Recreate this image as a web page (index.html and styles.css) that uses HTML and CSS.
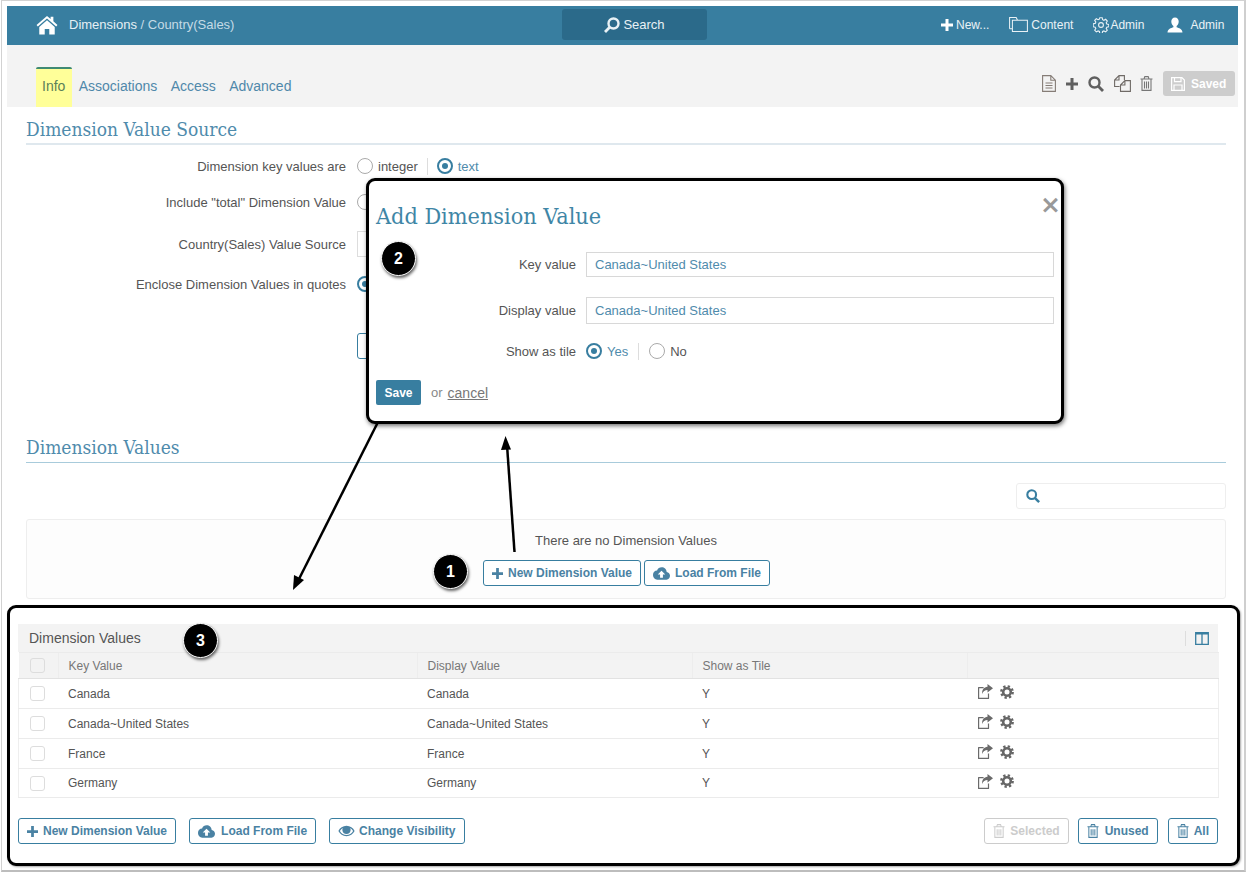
FILE: index.html
```html
<!DOCTYPE html>
<html lang="en">
<head>
<meta charset="utf-8">
<title>Dimension Values</title>
<link rel="stylesheet" href="styles.css">
</head>
<body>
<svg class="defs" width="0" height="0" aria-hidden="true">
  <symbol id="i-home" viewBox="0 0 24 22"><path d="M12 1 0.5 11l1.4 1.6L12 3.8l10.1 8.8 1.4-1.6L19 7V2h-3v2.4z"/><path d="M12 5.800 3.500 13.200V21.500h6v-6h5v6h6v-8.300z"/></symbol>
  <symbol id="i-plus" viewBox="0 0 12 12"><path d="M4.500 0h3v4.500H12v3H7.500V12h-3V7.500H0v-3h4.500z"/></symbol>
  <symbol id="i-search" viewBox="0 0 16 16"><circle cx="6.500" cy="6.500" r="5" fill="none" stroke="currentColor" stroke-width="2.400"/><path d="M10.300 10.300 15 15" fill="none" stroke="currentColor" stroke-width="2.800"/></symbol>
  <symbol id="i-folder" viewBox="0 0 20 16"><path d="M3.500 15.500V3.500h16v12zM3.500 3.500V3M.5 12.500V.5h7l1.500 3M.5 12.500h3" fill="none" stroke="currentColor" stroke-width="1.100"/></symbol>
  <symbol id="i-gear-o" viewBox="0 0 16 16"><circle cx="8" cy="8" r="2.400" fill="none" stroke="currentColor" stroke-width="1.100"/><path d="M6.800.7h2.400l.4 2 1.300.6 1.800-1 1.600 1.700-1.100 1.700.6 1.300 2 .4v2.400l-2 .4-.6 1.300 1.100 1.700-1.600 1.700-1.800-1-1.300.6-.4 2H6.800l-.4-2-1.300-.6-1.800 1-1.600-1.700 1.100-1.700-.6-1.300-2-.4V6.800l2-.4.6-1.300-1.100-1.700 1.600-1.700 1.800 1 1.300-.6z" fill="none" stroke="currentColor" stroke-width="1.100"/></symbol>
  <symbol id="i-user" viewBox="0 0 16 16"><path d="M8 .5c2.300 0 3.700 1.700 3.700 4 0 2-1 3.700-2.100 4.500v1.300c2.300.8 5.700 1.600 5.900 5.200H.5c.2-3.600 3.600-4.400 5.900-5.200V9C5.300 8.200 4.300 6.500 4.300 4.500c0-2.300 1.400-4 3.700-4z"/></symbol>
  <symbol id="i-doc" viewBox="0 0 14 17"><path d="M.6.6h8.200l4.600 4.600v11.200H.6zM8.800.6v4.600h4.600" fill="none" stroke="currentColor" stroke-width="1.100"/><path d="M3.500 8h7M3.500 10.500h7M3.500 13h7" stroke="currentColor" stroke-width="1.200"/></symbol>
  <symbol id="i-copy" viewBox="0 0 17 17"><path d="M.6 10V5L5 .6h5.400V5M5 .6V5H.6M.6 10v1.500h5" fill="none" stroke="currentColor" stroke-width="1.100"/><path d="M6.500 16.400V10l4.400-4.400h5.500v10.800zM6.500 10h4.400V5.600" fill="none" stroke="currentColor" stroke-width="1.100"/></symbol>
  <symbol id="i-trash" viewBox="0 0 13 15"><path d="M.5 3h12M4 3l.8-2.400h3.400L9 3M2 3v11.400h9V3" fill="none" stroke="currentColor" stroke-width="1.100"/><path d="M4.500 5.500v7M6.500 5.500v7M8.500 5.500v7" stroke="currentColor" stroke-width="1.100"/></symbol>
  <symbol id="i-save" viewBox="0 0 14 14"><path d="M.6.6h10.300l2.500 2.500v10.300H.6z" fill="none" stroke="currentColor" stroke-width="1.200"/><path d="M3.500.6v4h6.500v-4M3 13.400V8h8v5.400" fill="none" stroke="currentColor" stroke-width="1.200"/></symbol>
  <symbol id="i-cloud" viewBox="0 0 18 13"><path d="M14.500 5C14.300 2.200 12 0 9.200 0 7 0 5.100 1.300 4.300 3.300 1.900 3.300 0 5.300 0 7.800 0 10.600 2 13 4.500 13h9.800c2.100 0 3.700-1.800 3.700-4 0-2-1.500-3.700-3.500-4zM10.500 7.500V11h-3V7.500H5L9 3.500l4 4z"/></symbol>
  <symbol id="i-eye" viewBox="0 0 18 12"><path d="M9 .5C5.200.5 2 2.800.4 6 2 9.200 5.200 11.500 9 11.500s7-2.300 8.600-5.500C16 2.800 12.800.5 9 .5zm0 9.700C6.100 10.200 3.500 8.600 2 6c.8-1.300 1.900-2.400 3.200-3.100-.4.600-.6 1.300-.6 2 0 2.400 2 4.400 4.400 4.400s4.400-2 4.400-4.400c0-.7-.2-1.400-.6-2 1.300.7 2.400 1.800 3.200 3.100-1.500 2.600-4.100 4.200-7 4.200z"/></symbol>
  <symbol id="i-share" viewBox="0 0 15 15"><path d="M10.500 9.500v4.900H.6V3.600h5" fill="none" stroke="currentColor" stroke-width="1.200" stroke-linejoin="round"/><path d="M9.500 0 15 4.300 9.500 8.600V6C7 6 5 7.300 4 10c0-4.500 2-7 5.500-7.300z"/></symbol>
  <symbol id="i-gear" viewBox="0 0 14 14"><circle cx="7" cy="7" r="3.800" fill="none" stroke="currentColor" stroke-width="2.600"/><circle cx="7" cy="7" r="5.700" fill="none" stroke="currentColor" stroke-width="2.400" stroke-dasharray="2.300 2.177"/></symbol>
  <symbol id="i-cols" viewBox="0 0 14 13"><path d="M.7.7h12.600v11.600H.7zM7 .7v11.600M.7 1.800h12.600" fill="none" stroke="currentColor" stroke-width="1.300"/></symbol>
</svg>

<div class="frame">
  <header class="topbar">
    <div class="crumbs">
      <svg class="ic-home"><use href="#i-home"/></svg>
      <span class="crumb-main">Dimensions</span><span class="crumb-sub">&nbsp;/ Country(Sales)</span>
    </div>
    <div class="global-search"><svg class="ic-gs"><use href="#i-search"/></svg>Search</div>
    <nav class="topnav">
      <span class="nav-item nav-new"><svg class="ic-12"><use href="#i-plus"/></svg>New...</span>
      <span class="nav-item nav-content"><svg class="ic-folder"><use href="#i-folder"/></svg>Content</span>
      <span class="nav-item nav-admin"><svg class="ic-16"><use href="#i-gear-o"/></svg>Admin</span>
      <span class="nav-item nav-user"><svg class="ic-16"><use href="#i-user"/></svg>Admin</span>
    </nav>
  </header>

  <div class="subbar">
    <div class="tabs">
      <span class="tab tab-active">Info</span>
      <span class="tab">Associations</span>
      <span class="tab">Access</span>
      <span class="tab">Advanced</span>
    </div>
    <div class="tools">
      <svg class="t-doc"><use href="#i-doc"/></svg>
      <svg class="t-plus"><use href="#i-plus"/></svg>
      <svg class="t-search"><use href="#i-search"/></svg>
      <svg class="t-copy"><use href="#i-copy"/></svg>
      <svg class="t-trash"><use href="#i-trash"/></svg>
      <span class="saved"><svg class="ic-14"><use href="#i-save"/></svg>Saved</span>
    </div>
  </div>

  <main class="content">
    <h2 class="section-title first">Dimension Value Source</h2>
    <div class="form">
      <div class="form-row r1">
        <span class="label">Dimension key values are</span>
        <span class="radio"></span><span class="opt">integer</span><span class="sep"></span>
        <span class="radio on"></span><span class="opt opt-on">text</span>
      </div>
      <div class="form-row r2"><span class="label">Include "total" Dimension Value</span><span class="radio"></span></div>
      <div class="form-row r3"><span class="label">Country(Sales) Value Source</span><span class="field-stub"></span></div>
      <div class="form-row r4"><span class="label">Enclose Dimension Values in quotes</span><span class="radio on"></span></div>
      <div class="form-row r5"><span class="label"></span><span class="btn-stub"></span></div>
    </div>

    <h2 class="section-title second">Dimension Values</h2>
    <div class="search-line"><div class="search-box"><svg class="ic-14 blue"><use href="#i-search"/></svg></div></div>
    <div class="empty">
      <p class="empty-text">There are no Dimension Values</p>
      <div class="empty-actions">
        <span class="btn"><svg class="ic-11"><use href="#i-plus"/></svg>New Dimension Value</span>
        <span class="btn"><svg class="ic-cloud"><use href="#i-cloud"/></svg>Load From File</span>
      </div>
    </div>
  </main>

  <section class="callout">
    <div class="grid">
      <div class="grid-title">
        <span>Dimension Values</span>
        <span class="grid-tools"><svg class="ic-cols"><use href="#i-cols"/></svg></span>
      </div>
      <table class="values">
        <colgroup><col class="c1"><col class="c2"><col class="c3"><col class="c4"><col class="c5"></colgroup>
        <thead>
          <tr><th><span class="check"></span></th><th>Key Value</th><th>Display Value</th><th>Show as Tile</th><th></th></tr>
        </thead>
        <tbody>
          <tr><td><span class="check"></span></td><td>Canada</td><td>Canada</td><td>Y</td><td class="acts"><svg class="ic-share"><use href="#i-share"/></svg><svg class="ic-gear"><use href="#i-gear"/></svg></td></tr>
          <tr><td><span class="check"></span></td><td>Canada~United States</td><td>Canada~United States</td><td>Y</td><td class="acts"><svg class="ic-share"><use href="#i-share"/></svg><svg class="ic-gear"><use href="#i-gear"/></svg></td></tr>
          <tr><td><span class="check"></span></td><td>France</td><td>France</td><td>Y</td><td class="acts"><svg class="ic-share"><use href="#i-share"/></svg><svg class="ic-gear"><use href="#i-gear"/></svg></td></tr>
          <tr class="last"><td><span class="check"></span></td><td>Germany</td><td>Germany</td><td>Y</td><td class="acts"><svg class="ic-share"><use href="#i-share"/></svg><svg class="ic-gear"><use href="#i-gear"/></svg></td></tr>
        </tbody>
      </table>
    </div>
    <div class="grid-actions">
      <span class="btn"><svg class="ic-11"><use href="#i-plus"/></svg>New Dimension Value</span>
      <span class="btn"><svg class="ic-cloud"><use href="#i-cloud"/></svg>Load From File</span>
      <span class="btn"><svg class="ic-eye"><use href="#i-eye"/></svg>Change Visibility</span>
      <span class="spacer"></span>
      <span class="btn disabled"><svg class="ic-trash"><use href="#i-trash"/></svg>Selected</span>
      <span class="btn"><svg class="ic-trash"><use href="#i-trash"/></svg>Unused</span>
      <span class="btn"><svg class="ic-trash"><use href="#i-trash"/></svg>All</span>
    </div>
  </section>
</div>

<svg class="arrows" width="1247" height="874" viewBox="0 0 1247 874" aria-hidden="true">
  <path d="M514.500 552 507 445" stroke="#000" stroke-width="2.500" fill="none"/>
  <path d="M505.500 436 501 450 511 449.500z" fill="#000"/>
  <path d="M379 420 299 579" stroke="#000" stroke-width="2.500" fill="none"/>
  <path d="M293 590 294 575 304 580z" fill="#000"/>
</svg>

<div class="dialog">
  <span class="close">&times;</span>
  <h3 class="dialog-title">Add Dimension Value</h3>
  <div class="d-row d1"><span class="d-label">Key value</span><div class="d-input">Canada~United States</div></div>
  <div class="d-row d2"><span class="d-label">Display value</span><div class="d-input">Canada~United States</div></div>
  <div class="d-row d3"><span class="d-label">Show as tile</span>
    <span class="radio on"></span><span class="opt opt-on">Yes</span><span class="sep"></span>
    <span class="radio"></span><span class="opt">No</span>
  </div>
  <div class="d-actions"><span class="save">Save</span><span class="or">or</span><span class="cancel">cancel</span></div>
</div>

<span class="badge b1">1</span>
<span class="badge b2">2</span>
<span class="badge b3">3</span>
</body>
</html>
```

FILE: styles.css
```css
* { box-sizing: border-box; }
html, body { margin: 0; padding: 0; }
body {
  position: relative;
  width: 1247px;
  height: 874px;
  overflow: hidden;
  background: #fff;
  font-family: "Liberation Sans", Arial, sans-serif;
  font-size: 13px;
  color: #555;
}
svg { fill: currentColor; display: block; flex: none; }
.defs { position: absolute; }

.frame {
  width: 1245px;
  height: 872px;
  margin-left: 1px;
  padding: 5px 6px 0 5px;
  border: 1px solid #d2d2d2;
  border-right: 2px solid #cfcfcf;
  border-bottom: 2px solid #bdbdbd;
  background: #fff;
}

/* top bar */
.topbar {
  display: flex;
  align-items: center;
  position: relative;
  height: 39px;
  padding-bottom: 2px;
  background: #387ea0;
  color: #fff;
}
.crumbs { display: flex; align-items: center; width: 555px; padding-left: 29px; font-size: 13px; }
.ic-home { width: 22px; height: 20px; margin-right: 11px; }
.crumb-main { color: #e6f0f5; }
.crumb-sub { color: #c5dbe6; }
.global-search {
  display: flex;
  align-items: center;
  justify-content: center;
  width: 145px;
  height: 31px;
  border-radius: 3px;
  background: #2b6a8a;
  color: #e8f1f5;
  font-size: 13px;
}
.ic-gs { width: 16px; height: 16px; margin-right: 3px; transform: scaleX(-1); }
.topnav { display: flex; align-items: center; margin-left: 234px; font-size: 12px; color: #eaf2f6; }
.nav-item { display: flex; align-items: center; }
.ic-12 { width: 12px; height: 12px; margin-right: 3px; color: #fff; }
.ic-folder { width: 19px; height: 15px; margin-right: 3px; }
.ic-16 { width: 16px; height: 16px; margin-right: 1px; }
.nav-content { margin-left: 20px; }
.nav-admin { margin-left: 20px; }
.nav-user { margin-left: 23px; }
.nav-user .ic-16 { margin-right: 7px; color: #fff; }

/* sub bar */
.subbar {
  display: flex;
  justify-content: space-between;
  align-items: flex-end;
  height: 62px;
  padding: 0 3px 0 29px;
  background: #f3f3f3;
}
.tabs { display: flex; align-items: flex-end; height: 40px; font-size: 14px; color: #4f88aa; }
.tab { display: flex; align-items: center; height: 40px; padding: 0 6.700px 2px; }
.tab-active {
  width: 36px;
  padding: 0 0 4px 6px;
  background: #ffff99;
  border-top: 2px solid #3f8a73;
  border-radius: 2px 2px 0 0;
  color: #5b7f58;
  margin-right: 0;
}
.tools { display: flex; align-items: center; height: 25px; margin-bottom: 11px; color: #666; }
.t-doc { width: 14px; height: 17px; margin-right: 10px; color: #857c76; }
.t-plus { width: 12px; height: 12px; margin-right: 10px; color: #5f5f5f; }
.t-search { width: 16px; height: 16px; margin-right: 10px; color: #5f5f5f; }
.t-copy { width: 17px; height: 17px; margin-right: 9px; color: #6f6a66; }
.t-trash { width: 13px; height: 15px; margin-right: 10px; color: #777; }
.saved {
  display: flex;
  align-items: center;
  width: 72px;
  height: 25px;
  padding-left: 8px;
  border-radius: 3px;
  background: #cdcdcd;
  color: #fff;
  font-size: 12px;
  font-weight: bold;
}
.saved .ic-14 { margin-right: 6px; }
.ic-14 { width: 14px; height: 14px; }
.blue { color: #387ea0; }

/* content */
.content { padding: 0 12px 0 19px; }
.section-title {
  margin: 0;
  border-bottom: 1px solid #dfe8ee;
  font-family: "DejaVu Serif Condensed", "DejaVu Serif", "Liberation Serif", serif;
  font-stretch: condensed;
  font-weight: normal;
  font-size: 19px;
  color: #4f8bac;
}
.section-title.first { height: 38px; padding-top: 10px; line-height: 24px; border-bottom-width: 2px; }
.section-title.second { height: 40px; margin-top: 0; padding-top: 12px; line-height: 24px; border-bottom-color: #a8cbdb; }

.form { height: 275px; }
.form-row { display: flex; align-items: center; }
.label { width: 320px; margin-right: 11px; text-align: right; color: #555; }
.r1 { height: 36px; margin-top: 3px; }
.r2 { height: 36px; }
.r3 { height: 26px; margin-top: 11px; }
.r4 { height: 36px; margin-top: 9px; }
.r5 { height: 26px; margin-top: 31px; }
.r1 .sep { margin: 0 9px; }
.field-stub { width: 120px; height: 26px; border: 1px solid #ddd; }
.btn-stub { width: 60px; height: 26px; border: 1px solid #387ea0; border-radius: 3px; }

.radio {
  display: inline-block;
  flex: none;
  width: 16px;
  height: 16px;
  border: 1px solid #aaa;
  border-radius: 50%;
  background: #fff;
  position: relative;
}
.radio.on { border: 2px solid #387ea0; }
.radio.on::after {
  content: "";
  position: absolute;
  left: 3px;
  top: 3px;
  width: 6px;
  height: 6px;
  border-radius: 50%;
  background: #387ea0;
}
.opt { margin-left: 5px; color: #555; }
.opt-on { color: #4f8bac; }
.sep { width: 1px; height: 17px; margin: 0 10px; background: #ddd; }

.search-line { display: flex; justify-content: flex-end; margin-top: 20px; }
.search-box {
  display: flex;
  align-items: center;
  width: 210px;
  height: 26px;
  padding-left: 9px;
  border: 1px solid #eee;
  border-radius: 3px;
}
.empty {
  height: 80px;
  margin-top: 10px;
  padding-top: 13px;
  border: 1px solid #eee;
  border-radius: 3px;
  background: #fdfdfd;
  text-align: center;
}
.empty-text { margin: 0; height: 15px; line-height: 15px; color: #555; }
.empty-actions { display: flex; justify-content: center; gap: 3px; margin-top: 12px; padding-left: 1px; }

.btn {
  display: inline-flex;
  align-items: center;
  flex: none;
  height: 26px;
  padding: 0 8px;
  border: 1px solid #387ea0;
  border-radius: 3px;
  background: #fff;
  color: #4a82a3;
  font-size: 12px;
  font-weight: bold;
  white-space: nowrap;
}
.btn.disabled { border-color: #ccc; color: #ccc; }
.ic-11 { width: 11px; height: 11px; margin-right: 5px; }
.ic-cloud { width: 17px; height: 13px; margin-right: 5px; }
.ic-eye { width: 17px; height: 12px; margin-right: 4px; }
.ic-trash { width: 12px; height: 14px; margin-right: 5px; }

/* outlined table area */
.callout {
  width: 1233px;
  height: 261px;
  margin-top: 6px;
  padding: 16px 19px 0 8px;
  border: 3px solid #000;
  border-radius: 9px;
  box-shadow: 1px 1px 2px rgba(0,0,0,.35);
  background: #fff;
}
.grid-title {
  display: flex;
  justify-content: space-between;
  align-items: center;
  height: 28px;
  padding-left: 11px;
  background: #f3f3f3;
  font-size: 14px;
  color: #555;
}
.grid-tools { display: flex; align-items: center; height: 15px; padding: 0 9px; border-left: 1px solid #ddd; color: #387ea0; }
.ic-cols { width: 14px; height: 13px; }
.values { width: 1200px; border-collapse: collapse; table-layout: fixed; font-size: 12px; color: #555; }
.c1 { width: 40px; }
.c2 { width: 359px; }
.c3 { width: 275px; }
.c4 { width: 275px; }
.c5 { width: 251px; }
.values th {
  height: 26px;
  padding: 0 0 0 9.500px;
  border-top: 1px solid #ebebeb;
  border-bottom: 1px solid #e2e2e2;
  border-left: 1px solid #ededed;
  background: #f3f3f3;
  font-weight: normal;
  text-align: left;
  color: #777;
}
.values th:first-child { border-left: 0; }
.values td { height: 30px; padding: 0 0 0 9.500px; border-bottom: 1px solid #ebebeb; }
.values tr.last td { height: 29px; }
.values td:first-child { border-left: 1px solid #eee; padding-left: 11px; }
.values th:first-child { padding-left: 11px; }
.values td:last-child { border-right: 1px solid #eee; }
.values td.acts { padding-left: 10px; }
.check { display: block; width: 15px; height: 15px; border: 1px solid #ddd; border-radius: 3px; background: #fff; }
th .check { background: #f3f3f3; }
.acts { white-space: nowrap; }
.acts svg { display: inline-block; vertical-align: middle; position: relative; top: -2px; }
.ic-share { width: 15px; height: 15px; color: #6a6a6a; margin-right: 7px; }
.ic-gear { width: 14px; height: 14px; color: #666; }
.grid-actions { display: flex; align-items: center; gap: 13px; margin-top: 20px; }
.grid-actions .ic-cloud { margin-right: 6px; }
.grid-actions .btn:nth-last-child(2) .ic-trash { margin-right: 6px; }
.spacer { flex: 1; }
.grid-actions .btn:nth-last-child(2) { margin-left: -4px; }
.grid-actions .btn:last-child { margin-left: -3px; }

/* overlays */
.arrows { position: absolute; left: 0; top: 0; pointer-events: none; }
.dialog {
  position: absolute;
  left: 366px;
  top: 178px;
  width: 698px;
  height: 246px;
  padding: 19px 7px 0 7px;
  border: 3px solid #000;
  border-radius: 9px;
  background: #fff;
  box-shadow: 1px 2px 4px rgba(0,0,0,.55);
}
.close { position: absolute; right: 0; top: 10px; font-size: 25px; line-height: 28px; font-weight: bold; color: #999; font-family: "DejaVu Sans", sans-serif; }
.dialog-title {
  margin: 0;
  height: 32px;
  line-height: 32px;
  font-family: "DejaVu Serif Condensed", "DejaVu Serif", "Liberation Serif", serif;
  font-stretch: condensed;
  font-weight: normal;
  font-size: 23.200px;
  color: #3f86a6;
}
.d-row { display: flex; align-items: center; }
.d-label { width: 200px; margin-right: 10px; text-align: right; color: #555; flex: none; }
.d-input {
  flex: 1;
  display: flex;
  align-items: center;
  height: 100%;
  padding-left: 8px;
  border: 1px solid #d8d8d8;
  color: #4f8bac;
}
.d1 { height: 25px; margin-top: 20px; }
.d2 { height: 27px; margin-top: 20px; }
.d3 { height: 20px; margin-top: 17px; }
.d-actions { display: flex; align-items: center; margin-top: 19px; }
.save {
  display: flex;
  align-items: center;
  justify-content: center;
  width: 45px;
  height: 25px;
  border-radius: 2px;
  background: #387ea0;
  color: #fff;
  font-size: 12px;
  font-weight: bold;
}
.or { margin-left: 10px; color: #888; }
.cancel { margin-left: 5px; color: #777; font-size: 14px; text-decoration: underline; }

.badge {
  position: absolute;
  display: flex;
  align-items: center;
  justify-content: center;
  width: 35px;
  height: 35px;
  border-radius: 50%;
  background: #000;
  color: #fff;
  font-weight: bold;
  font-size: 16px;
  border: 1px solid #fff;
  box-shadow: 1px 2px 3px rgba(0,0,0,.6);
}
.b1 { left: 433px; top: 554px; }
.b2 { left: 381px; top: 241px; }
.b3 { left: 183px; top: 623px; }
```
